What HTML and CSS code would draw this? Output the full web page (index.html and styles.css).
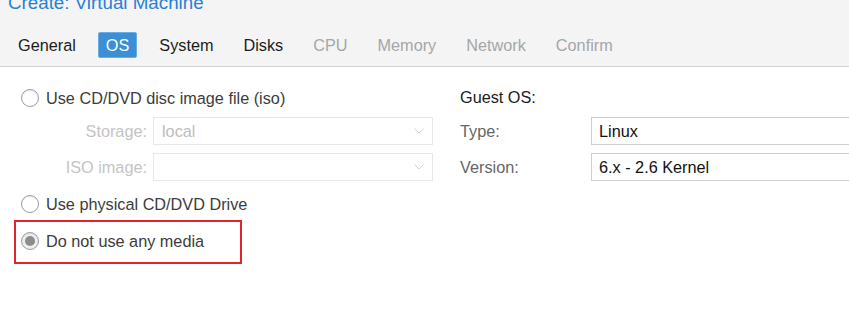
FILE: index.html
```html
<!DOCTYPE html>
<html lang="en">
<head>
    <meta charset="UTF-8">
    <meta name="viewport" content="width=device-width, initial-scale=1.0">
    <title>Create: Virtual Machine</title>
    <link rel="stylesheet" href="styles.css">
</head>
<body>
    <div class="wizard">
        <div class="wizard-head">
            <div class="title">Create: Virtual Machine</div>
            <ul class="tabs">
                <li>General</li>
                <li class="active">OS</li>
                <li>System</li>
                <li>Disks</li>
                <li class="off">CPU</li>
                <li class="off">Memory</li>
                <li class="off">Network</li>
                <li class="off">Confirm</li>
            </ul>
        </div>

        <div class="wizard-body">
            <div class="col-left">
                <label class="radio-row">
                    <span class="radio"></span>Use CD/DVD disc image file (iso)
                </label>
                <div class="field-row first disabled">
                    <span class="field-label">Storage:</span>
                    <div class="combo">
                        <span>local</span>
                        <svg class="chevron" viewBox="0 0 10 6"><path d="M0.5 0.5 L5 5 L9.5 0.5"/></svg>
                    </div>
                </div>
                <div class="field-row disabled">
                    <span class="field-label">ISO image:</span>
                    <div class="combo">
                        <span></span>
                        <svg class="chevron" viewBox="0 0 10 6"><path d="M0.5 0.5 L5 5 L9.5 0.5"/></svg>
                    </div>
                </div>
                <label class="radio-row spaced">
                    <span class="radio"></span>Use physical CD/DVD Drive
                </label>
                <div class="highlight">
                    <label class="radio-row">
                        <span class="radio checked"></span>Do not use any media
                    </label>
                </div>
            </div>

            <div class="col-right">
                <div class="section-title">Guest OS:</div>
                <div class="field-row first">
                    <span class="field-label wide">Type:</span>
                    <div class="combo long">Linux</div>
                </div>
                <div class="field-row">
                    <span class="field-label wide">Version:</span>
                    <div class="combo long">6.x - 2.6 Kernel</div>
                </div>
            </div>
        </div>
    </div>
</body>
</html>
```

FILE: styles.css
```css
*{
    box-sizing: border-box;
}
html, body{
    margin: 0;
    background: #fff;
    overflow: hidden;
}
body{
    font-family: "Liberation Sans", Arial, sans-serif;
    font-size: 16.25px;
    color: #1c1c1c;
}
.wizard-head{
    display: flow-root;
    height: 67px;
    background: #f4f4f4;
    border-bottom: 1px solid #d2d2d2;
}
.title{
    margin-top: -7px;
    padding-left: 8px;
    font-size: 18.75px;
    line-height: 19px;
    color: #2b80d2;
}
.tabs{
    display: flex;
    gap: 14px;
    list-style: none;
    margin: 20px 0 0;
    padding: 0 0 0 10px;
}
.tabs li{
    height: 26px;
    line-height: 24px;
    padding: 0 7px;
    border: 1px solid transparent;
    border-radius: 2px;
}
.tabs .active{
    background: #3a8fd6;
    border-color: #69ace4;
    color: #fff;
}
.tabs .off{
    color: #a6a6a6;
}

.wizard-body{
    display: flex;
    padding-top: 17px;
}
.col-left{
    flex: none;
    width: 439px;
    margin-left: 21px;
}
.col-right{
    flex: 1;
    min-width: 0;
}

.radio-row{
    display: flex;
    align-items: center;
    height: 28px;
    color: #3c3c3c;
}
.radio-row.spaced{
    margin-top: 9px;
}
.radio{
    position: relative;
    width: 18px;
    height: 18px;
    margin-right: 7px;
    border: 1px solid #9c9c9c;
    border-radius: 50%;
    background: #fff;
    box-shadow: inset 0 1px 1px rgba(0,0,0,0.08);
}
.radio.checked{
    background: #eeeeee;
}
.radio.checked::after{
    content: '';
    position: absolute;
    left: 3px;
    top: 3px;
    width: 10px;
    height: 10px;
    border-radius: 50%;
    background: #8c8c8c;
}
.highlight{
    width: 228px;
    height: 44px;
    margin: 2px 0 0 -7px;
    padding: 5px 0 0 5px;
    border: 2px solid #e3222c;
}

.field-row{
    display: flex;
    align-items: center;
    margin-top: 8px;
}
.field-row.first{
    margin-top: 5px;
}
.field-label{
    flex: none;
    width: 126px;
    margin-right: 6px;
    text-align: right;
    color: #666;
}
.field-label.wide{
    width: 131px;
    margin-right: 0;
    text-align: left;
}
.combo{
    flex: none;
    display: flex;
    align-items: center;
    justify-content: space-between;
    width: 280px;
    height: 28px;
    padding: 0 8px 0 8px;
    border: 1px solid #cfcfcf;
    background: #fff;
    color: #111;
}
.combo.long{
    width: 300px;
    padding-left: 7px;
}
.disabled .field-label{
    color: #c4c4c4;
}
.disabled .combo{
    border-color: #e8e8e8;
    color: #bdbdbd;
}
.chevron{
    width: 10px;
    height: 6px;
    fill: none;
    stroke: #d2d2d2;
    stroke-width: 1;
}
.section-title{
    height: 28px;
    line-height: 26px;
    color: #1c1c1c;
}
```
